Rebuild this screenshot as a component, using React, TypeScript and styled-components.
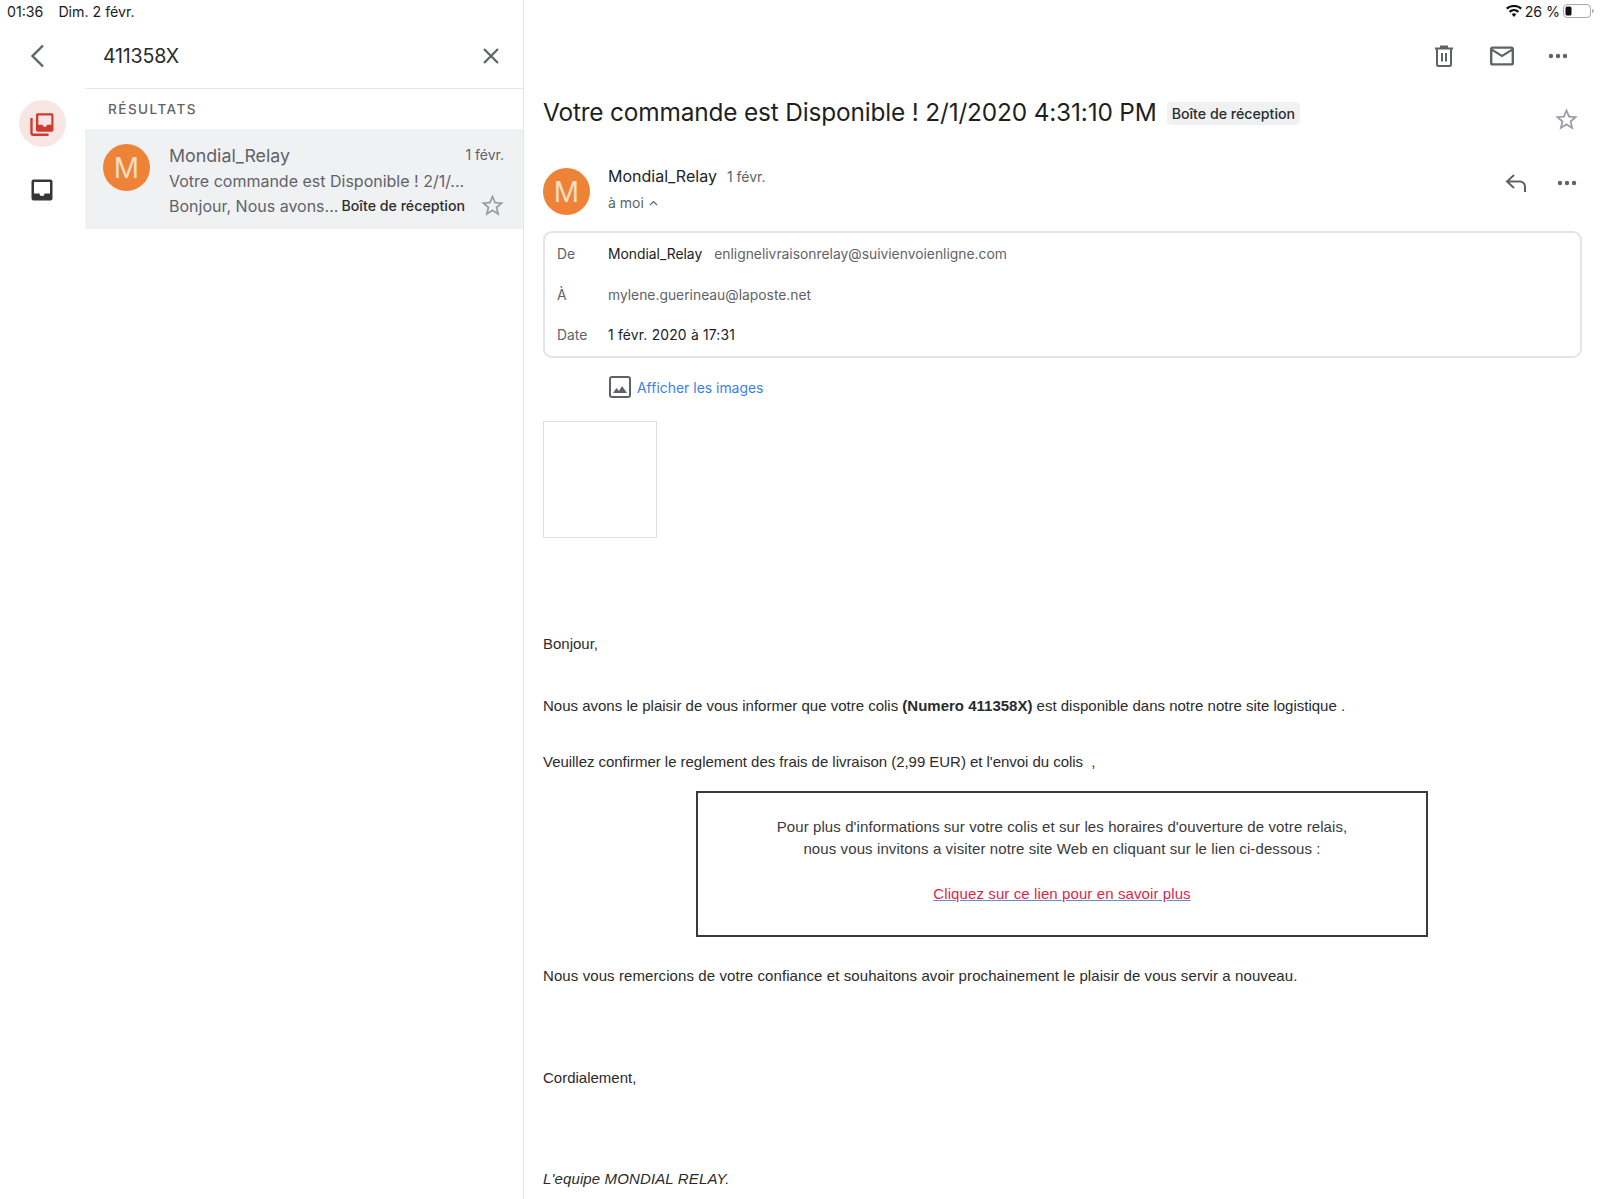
import * as React from 'react';
import styled, { createGlobalStyle } from 'styled-components';

const GlobalStyle = createGlobalStyle`
  html, body {
    margin: 0;
    padding: 0;
    background: #fff;
    font-family: "Inter", "Liberation Sans", sans-serif;
  }
`;

const Page = styled.div`
  display: flex;
  width: 1600px;
  height: 1199px;
  overflow: hidden;
  background: #fff;
`;

const Sidebar = styled.aside`
  width: 523px;
  flex: none;
  border-right: 1px solid #e6e7e9;
  display: flex;
  flex-direction: column;
`;

const StatusBar = styled.div<{ $right?: boolean }>`
  height: 22px;
  display: flex;
  align-items: center;
  justify-content: ${props => (props.$right ? 'flex-end' : 'flex-start')};
  gap: ${props => (props.$right ? '3px' : '15px')};
  padding: ${props => (props.$right ? '0 6px 0 0' : '0 0 0 7px')};
  font-size: 14.2px;
  color: #1b1b1d;
`;

const SidebarBody = styled.div`
  display: flex;
  flex: 1;
`;

const Rail = styled.nav`
  width: 85px;
  flex: none;
  display: flex;
  flex-direction: column;
  align-items: center;
`;

const BackSlot = styled.div`
  height: 66px;
  width: 100%;
  display: flex;
  align-items: center;
  padding: 2px 0 0 26px;
  box-sizing: border-box;
`;

const RailButton = styled.div<{ $active?: boolean }>`
  width: 47px;
  height: 47px;
  box-sizing: border-box;
  padding-right: 2px;
  border-radius: 50%;
  background: ${props => (props.$active ? '#f8e6e5' : 'transparent')};
  display: flex;
  align-items: center;
  justify-content: center;
  margin-top: ${props => (props.$active ? '12px' : '19px')};
`;

const ListColumn = styled.div`
  flex: 1;
  min-width: 0;
`;

const SearchBar = styled.div`
  height: 67px;
  box-sizing: border-box;
  border-bottom: 1px solid #e6e7e9;
  display: flex;
  align-items: center;
  justify-content: space-between;
  padding: 1px 22px 0 18px;
`;

const SearchText = styled.span`
  font-size: 19.6px;
  color: #2a2b2d;
  letter-spacing: -0.2px;
`;

const SectionLabel = styled.div`
  height: 40px;
  line-height: 40px;
  padding-left: 23px;
  font-size: 13.5px;
  font-weight: 500;
  letter-spacing: 1.5px;
  color: #5f6368;
`;

const ResultRow = styled.div`
  height: 100px;
  background: #f0f1f3;
  display: flex;
  padding: 15px 17px 0 18px;
  box-sizing: border-box;
  gap: 18px;
`;

const Avatar = styled.div`
  width: 47px;
  height: 47px;
  flex: none;
  border-radius: 50%;
  background: #ee8338;
  color: #fbdcc4;
  font-size: 28px;
  display: flex;
  align-items: center;
  justify-content: center;
`;

const MessageAvatar = styled(Avatar)`
  margin-top: 4px;
`;

const RowText = styled.div`
  flex: 1;
  min-width: 0;
  color: #5f6368;
`;

const RowLine = styled.div<{ $height: number }>`
  display: flex;
  align-items: center;
  justify-content: space-between;
  height: ${props => props.$height}px;
  white-space: nowrap;
`;

const RowSender = styled.span`
  font-size: 17.8px;
  margin-left: 1px;
`;

const RowDate = styled.span`
  font-size: 14px;
  margin-right: 2px;
  margin-bottom: 2px;
`;

const RowPreview = styled.span`
  font-size: 16px;
  margin-left: 1px;
`;

const RowMeta = styled.span`
  display: flex;
  align-items: center;
  gap: 14px;
`;

const LabelTag = styled.span<{ $big?: boolean }>`
  background: ${props => (props.$big ? '#f0f1f3' : 'transparent')};
  color: #2c2d2f;
  border-radius: 4px;
  font-size: 14.2px;
  font-weight: 500;
  padding: ${props => (props.$big ? '3px 5px' : '0')};
  margin-top: ${props => (props.$big ? '2px' : '0')};
  white-space: nowrap;
`;

const Pane = styled.main`
  flex: 1;
  min-width: 0;
  display: flex;
  flex-direction: column;
`;

const Toolbar = styled.div`
  height: 66px;
  display: flex;
  align-items: center;
  justify-content: flex-end;
  gap: 34px;
  padding: 2px 32px 0 0;
  box-sizing: border-box;
`;

const Content = styled.div`
  padding: 0 18px 0 19px;
`;

const SubjectRow = styled.div`
  display: flex;
  align-items: center;
  height: 48px;
`;

const Subject = styled.h1`
  margin: 0 10px 0 0;
  font-size: 24.4px;
  letter-spacing: -0.16px;
  font-weight: 400;
  color: #1f1f21;
  white-space: nowrap;
`;

const SubjectStar = styled.div`
  margin: 14px 2px 0 auto;
  display: flex;
`;

const SenderRow = styled.div`
  display: flex;
  margin-top: 28px;
  height: 65px;
`;

const SenderInfo = styled.div`
  margin-left: 18px;
  flex: 1;
`;

const SenderLine = styled.div`
  display: flex;
  align-items: center;
  gap: 10px;
  height: 24px;
`;

const SenderName = styled.span`
  font-size: 16px;
  color: #232325;
`;

const SenderDate = styled.span`
  font-size: 14px;
  color: #5f6368;
`;

const ToMe = styled.div`
  display: flex;
  align-items: center;
  gap: 5px;
  margin-top: 6px;
  font-size: 14px;
  color: #5f6368;
`;

const SenderActions = styled.div`
  display: flex;
  align-items: center;
  gap: 29px;
  height: 24px;
  margin-top: 7px;
  padding-right: 5px;
`;

const DetailsCard = styled.div`
  border: 2px solid #e3e4e6;
  border-radius: 9px;
  height: 127px;
  box-sizing: border-box;
  margin-top: 2px;
  padding: 1px 0 0 12px;
`;

const DetailRow = styled.div`
  display: flex;
  align-items: center;
  height: 40.4px;
  font-size: 13.85px;
`;

const DetailLabel = styled.span`
  width: 51px;
  color: #5f6368;
`;

const DetailValue = styled.span<{ $muted?: boolean; $wide?: boolean }>`
  color: ${props => (props.$muted ? '#5f6368' : '#202124')};
  letter-spacing: ${props => (props.$wide ? '0.2px' : '0')};
  margin-right: 12px;
`;

const ShowImages = styled.div`
  display: flex;
  align-items: center;
  gap: 6px;
  margin: 17px 0 0 66px;
  height: 24px;
  font-size: 13.95px;
  color: #3d7fe6;
`;

const ImagePlaceholder = styled.div`
  width: 114px;
  height: 117px;
  box-sizing: border-box;
  border: 1px solid #dfdfdf;
  margin-top: 22px;
`;

const BodyLine = styled.p<{ $top: number; $italic?: boolean; $spacing?: number }>`
  margin: ${props => props.$top}px 0 0;
  font-family: "Liberation Sans", Arial, sans-serif;
  font-size: 15px;
  line-height: 20px;
  color: #2b2b2b;
  white-space: pre;
  letter-spacing: ${props => props.$spacing || 0}px;
  font-style: ${props => (props.$italic ? 'italic' : 'normal')};
`;

const NoticeBox = styled.div`
  width: 732px;
  height: 146px;
  box-sizing: border-box;
  border: 2px solid #3b3b3b;
  margin: 19px 0 0 153px;
  padding-top: 23px;
  font-family: "Liberation Sans", Arial, sans-serif;
  font-size: 15px;
  line-height: 22px;
  letter-spacing: 0.1px;
  color: #3a3a3a;
  text-align: center;
`;

const NoticeLink = styled.a`
  display: inline-block;
  margin-top: 23px;
  color: #df1f4a;
  text-decoration: underline;
  text-decoration-color: #5b8fd6;
`;

const Svg = styled.svg`
  display: block;
  flex: none;
`;

function Star({ size }: { size: number }) {
  return (
    <Svg width={size} height={size} viewBox="0 0 24 24" fill="#9a9fa5">
      <path d="M22 9.24l-7.19-.62L12 2 9.19 8.63 2 9.24l5.46 4.73L5.82 21 12 17.27 18.18 21l-1.63-7.03L22 9.24zM12 15.4l-3.76 2.27 1-4.28-3.32-2.88 4.38-.38L12 6.1l1.71 4.04 4.38.38-3.32 2.88 1 4.28L12 15.4z" />
    </Svg>
  );
}

function Dots() {
  return (
    <Svg width="20" height="6" viewBox="0 0 20 6" fill="#5f6368">
      <circle cx="3" cy="3" r="2.2" />
      <circle cx="10" cy="3" r="2.2" />
      <circle cx="17" cy="3" r="2.2" />
    </Svg>
  );
}

function TrayIcon({ color }: { color: string }) {
  return (
    <path
      fill={color}
      d="M8 2h13a1.6 1.6 0 0 1 1.6 1.6v14a1.6 1.6 0 0 1-1.6 1.6H8a1.6 1.6 0 0 1-1.6-1.6V3.600A1.600 1.600 0 0 1 8 2zm.6 2.200v8.400h4a2 2 0 0 0 4 0h4V4.200z"
    />
  );
}

export default function App() {
  return (
    <Page>
      <GlobalStyle />
      <Sidebar>
        <StatusBar>
          <span>01:36</span>
          <span>Dim. 2 févr.</span>
        </StatusBar>
        <SidebarBody>
          <Rail>
            <BackSlot>
              <Svg width="24" height="24" viewBox="0 0 24 24" fill="none" stroke="#5f6368" strokeWidth="2.4">
                <path d="M17 1.500L6.500 12 17 22.500" />
              </Svg>
            </BackSlot>
            <RailButton $active>
              <Svg width="26" height="26" viewBox="0 0 24 24">
                <TrayIcon color="#cf3b2f" />
                <path fill="none" stroke="#cf3b2f" strokeWidth="2.200" d="M2.300 6.500V20.300a1.600 1.600 0 0 0 1.600 1.600H18" />
              </Svg>
            </RailButton>
            <RailButton>
              <Svg width="24" height="24" viewBox="0 0 24 24" fill="#35383b">
                <path d="M3.500 1.500h17a2 2 0 0 1 2 2v17a2 2 0 0 1-2 2h-17a2 2 0 0 1-2-2v-17a2 2 0 0 1 2-2zm.5 2.500v11.500h5.500a2.500 2.500 0 0 0 5 0H20V4z" />
              </Svg>
            </RailButton>
          </Rail>
          <ListColumn>
            <SearchBar>
              <SearchText>411358X</SearchText>
              <Svg width="20" height="20" viewBox="0 0 20 20" fill="none" stroke="#5f6368" strokeWidth="2.200">
                <path d="M3 3l14 14M17 3L3 17" />
              </Svg>
            </SearchBar>
            <SectionLabel>RÉSULTATS</SectionLabel>
            <ResultRow>
              <Avatar>M</Avatar>
              <RowText>
                <RowLine $height={22}>
                  <RowSender>Mondial_Relay</RowSender>
                  <RowDate>1 févr.</RowDate>
                </RowLine>
                <RowLine $height={29}>
                  <RowPreview>Votre commande est Disponible ! 2/1/...</RowPreview>
                </RowLine>
                <RowLine $height={21}>
                  <RowPreview>Bonjour, Nous avons...</RowPreview>
                  <RowMeta>
                    <LabelTag>Boîte de réception</LabelTag>
                    <Star size={27} />
                  </RowMeta>
                </RowLine>
              </RowText>
            </ResultRow>
          </ListColumn>
        </SidebarBody>
      </Sidebar>
      <Pane>
        <StatusBar $right>
          <Svg width="16" height="12" viewBox="0 0 16 12" fill="#111">
            <path d="M8 12L5.700 9.200a3.500 3.500 0 0 1 4.600 0zM4.300 7.700L2.800 6a8 8 0 0 1 10.400 0l-1.500 1.700a5.700 5.700 0 0 0-7.400 0zM1.500 4.500L0 2.800a12.400 12.400 0 0 1 16 0l-1.500 1.700a10 10 0 0 0-13 0z" />
          </Svg>
          <span>26 %</span>
          <Svg width="31" height="14" viewBox="0 0 31 14" fill="none">
            <rect x="0.500" y="0.500" width="27" height="13" rx="3.500" stroke="#a9a9a9" />
            <rect x="2.500" y="2.500" width="6" height="9" rx="1.500" fill="#111" />
            <rect x="29" y="5" width="1.500" height="4" rx="0.700" fill="#a9a9a9" />
          </Svg>
        </StatusBar>
        <Toolbar>
          <Svg width="24" height="24" viewBox="0 0 24 24" fill="none" stroke="#5f6368" strokeWidth="2">
            <path d="M3 4.500h18M9 4V2.500h6V4M5 5v15.500A1.500 1.500 0 0 0 6.500 22h11a1.500 1.500 0 0 0 1.500-1.500V5M10 9v8.500M14 9v8.500" />
          </Svg>
          <Svg width="24" height="20" viewBox="2 4 20 16" fill="#5f6368">
            <path d="M20 4H4c-1.100 0-2 .9-2 2v12c0 1.100.9 2 2 2h16c1.100 0 2-.9 2-2V6c0-1.100-.9-2-2-2zm0 14H4V8l8 5 8-5v10zm-8-7L4 6h16l-8 5z" />
          </Svg>
          <Dots />
        </Toolbar>
        <Content>
          <SubjectRow>
            <Subject>Votre commande est Disponible ! 2/1/2020 4:31:10 PM</Subject>
            <LabelTag $big>Boîte de réception</LabelTag>
            <SubjectStar>
              <Star size={27} />
            </SubjectStar>
          </SubjectRow>
          <SenderRow>
            <MessageAvatar>M</MessageAvatar>
            <SenderInfo>
              <SenderLine>
                <SenderName>Mondial_Relay</SenderName>
                <SenderDate>1 févr.</SenderDate>
              </SenderLine>
              <ToMe>
                à moi
                <Svg width="9" height="6" viewBox="0 0 9 6" fill="none" stroke="#5f6368" strokeWidth="1.200">
                  <path d="M1 5l3.500-3.500L8 5" />
                </Svg>
              </ToMe>
            </SenderInfo>
            <SenderActions>
              <Svg width="24" height="20" viewBox="0 0 24 20" fill="none" stroke="#5f6368" strokeWidth="2">
                <path d="M10 2L3 8.500 10 15M3 8.500h13a5 5 0 0 1 5 5V19" />
              </Svg>
              <Dots />
            </SenderActions>
          </SenderRow>
          <DetailsCard>
            <DetailRow>
              <DetailLabel>De</DetailLabel>
              <DetailValue>Mondial_Relay</DetailValue>
              <DetailValue $muted>enlignelivraisonrelay@suivienvoienligne.com</DetailValue>
            </DetailRow>
            <DetailRow>
              <DetailLabel>À</DetailLabel>
              <DetailValue $muted>mylene.guerineau@laposte.net</DetailValue>
            </DetailRow>
            <DetailRow>
              <DetailLabel>Date</DetailLabel>
              <DetailValue $wide>1 févr. 2020 à 17:31</DetailValue>
            </DetailRow>
          </DetailsCard>
          <ShowImages>
            <Svg width="22" height="22" viewBox="0 0 22 22" fill="none">
              <rect x="1" y="1" width="20" height="20" rx="2" stroke="#5f6368" strokeWidth="2" />
              <path d="M4 17l3.500-5 2.500 3 3-5 5 7z" fill="#5f6368" />
            </Svg>
            Afficher les images
          </ShowImages>
          <ImagePlaceholder />
          <BodyLine $top={96}>Bonjour,</BodyLine>
          <BodyLine $top={42}>
            Nous avons le plaisir de vous informer que votre colis <b>(Numero 411358X)</b> est disponible dans notre notre site logistique .
          </BodyLine>
          <BodyLine $top={36} $spacing={-0.036}>Veuillez confirmer le reglement des frais de livraison (2,99 EUR) et l'envoi du colis  ,</BodyLine>
          <NoticeBox>
            Pour plus d'informations sur votre colis et sur les horaires d'ouverture de votre relais,
            <br />
            nous vous invitons a visiter notre site Web en cliquant sur le lien ci-dessous :
            <br />
            <NoticeLink>Cliquez sur ce lien pour en savoir plus</NoticeLink>
          </NoticeBox>
          <BodyLine $top={29} $spacing={0.09}>Nous vous remercions de votre confiance et souhaitons avoir prochainement le plaisir de vous servir a nouveau.</BodyLine>
          <BodyLine $top={82}>Cordialement,</BodyLine>
          <BodyLine $top={81} $italic $spacing={0.13}>L'equipe MONDIAL RELAY.</BodyLine>
        </Content>
      </Pane>
    </Page>
  );
}
